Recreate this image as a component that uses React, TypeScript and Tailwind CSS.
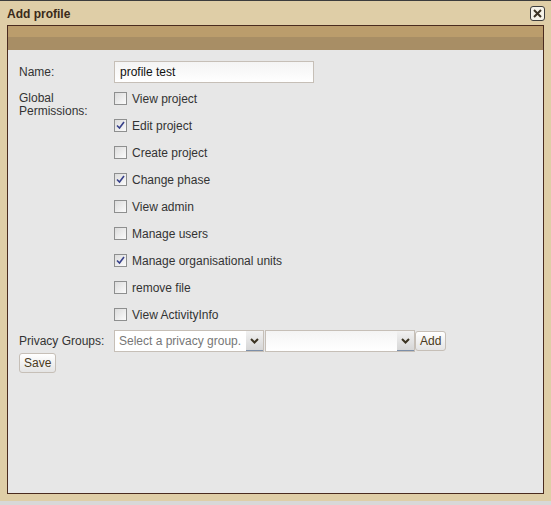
const perms = [
  { label: 'View project', checked: false },
  { label: 'Edit project', checked: true },
  { label: 'Create project', checked: false },
  { label: 'Change phase', checked: true },
  { label: 'View admin', checked: false },
  { label: 'Manage users', checked: false },
  { label: 'Manage organisational units', checked: true },
  { label: 'remove file', checked: false },
  { label: 'View ActivityInfo', checked: false }
];

function Check({ checked }: { checked: boolean }) {
  return (
    <span className="flex h-[13px] w-[13px] items-center justify-center border border-[#8e8f8f] bg-gradient-to-br from-[#dcdcdc] to-[#fbfbfb]">
      {checked && (
        <svg width="9" height="9" viewBox="0 0 9 9">
          <path d="M1 4.5 L3.5 7 L8 1" fill="none" stroke="#37418a" strokeWidth="1.6" />
        </svg>
      )}
    </span>
  );
}

function DropBtn() {
  return (
    <span className="flex h-[20px] w-[17px] items-center justify-center border-b border-b-[#7d8fa8] bg-gradient-to-b from-[#f2f2f2] to-[#d6d6d6]">
      <svg width="9" height="6" viewBox="0 0 9 6">
        <path d="M1 1 L4.5 4.5 L8 1" fill="none" stroke="#3b3322" strokeWidth="2" />
      </svg>
    </span>
  );
}

export default function App() {
  return (
    <div className="h-[505px] w-[551px] bg-[#d8d8d8] font-['Liberation_Sans',Arial,sans-serif] text-[12px] text-[#333]">
      <div className="flex h-[501px] w-[551px] flex-col border-t border-t-[#3c3c3c] bg-[#dfcea7]">
        {/* title bar */}
        <div className="flex h-[24px] items-center justify-between pl-[7px] pr-[6px] pt-px">
          <span className="text-[12px] font-bold text-[#3a2a1a]">Add profile</span>
          <span className="flex h-[15px] w-[15px] items-center justify-center rounded-[3px] border border-[#3d3d3d] bg-[#f6f3ea]">
            <svg width="9" height="9" viewBox="0 0 9 9">
              <path d="M1 1 L8 8 M8 1 L1 8" stroke="#3d3325" strokeWidth="2" />
            </svg>
          </span>
        </div>
        {/* panel */}
        <div className="mx-[7px] flex h-[469px] flex-col border border-[#4a2b1f] bg-[#e7e7e7]">
          <div className="h-[11px] bg-[#bb9d6c]" />
          <div className="h-[13px] bg-[#a88e65]" />
          <div className="flex flex-col pl-[11px] pt-[11px]">
            <div className="flex items-center">
              <span className="w-[95px]">Name:</span>
              <div className="flex h-[22px] w-[200px] items-center border border-[#c6bfb7] bg-gradient-to-b from-[#f4f4f4] to-white px-[5px] text-[#111]">
                profile test
              </div>
            </div>
            <div className="mt-[9px] flex">
              <span className="w-[95px] leading-[13px]">
                Global
                <br />
                Permissions:
              </span>
              <div className="flex flex-col gap-[14px]">
                {perms.map((p, i) => (
                  <div key={i} className="flex h-[13px] items-center gap-[5px]">
                    <Check checked={p.checked} />
                    <span>{p.label}</span>
                  </div>
                ))}
              </div>
            </div>
            <div className="mt-[9px] flex items-center">
              <span className="w-[95px]">Privacy Groups:</span>
              <div className="flex h-[22px] w-[150px] items-center border border-[#c6bfb7] bg-white">
                <span className="flex-1 pl-[4px] text-[#777]">Select a privacy group.</span>
                <DropBtn />
              </div>
              <div className="ml-px flex h-[22px] w-[150px] items-center border border-[#c6bfb7] bg-gradient-to-b from-[#f4f4f4] to-white">
                <span className="flex-1" />
                <DropBtn />
              </div>
              <span className="flex h-[20px] items-center rounded-[3px] border border-[#c6bfb7] bg-gradient-to-b from-white to-[#e4e4e4] px-[4px] text-[#4a3a20]">
                Add
              </span>
            </div>
            <div className="mt-[1px]">
              <span className="inline-flex h-[20px] items-center rounded-[3px] border border-[#c6bfb7] bg-gradient-to-b from-white to-[#e4e4e4] px-[4px] text-[#4a3a20]">
                Save
              </span>
            </div>
          </div>
        </div>
      </div>
    </div>
  );
}
